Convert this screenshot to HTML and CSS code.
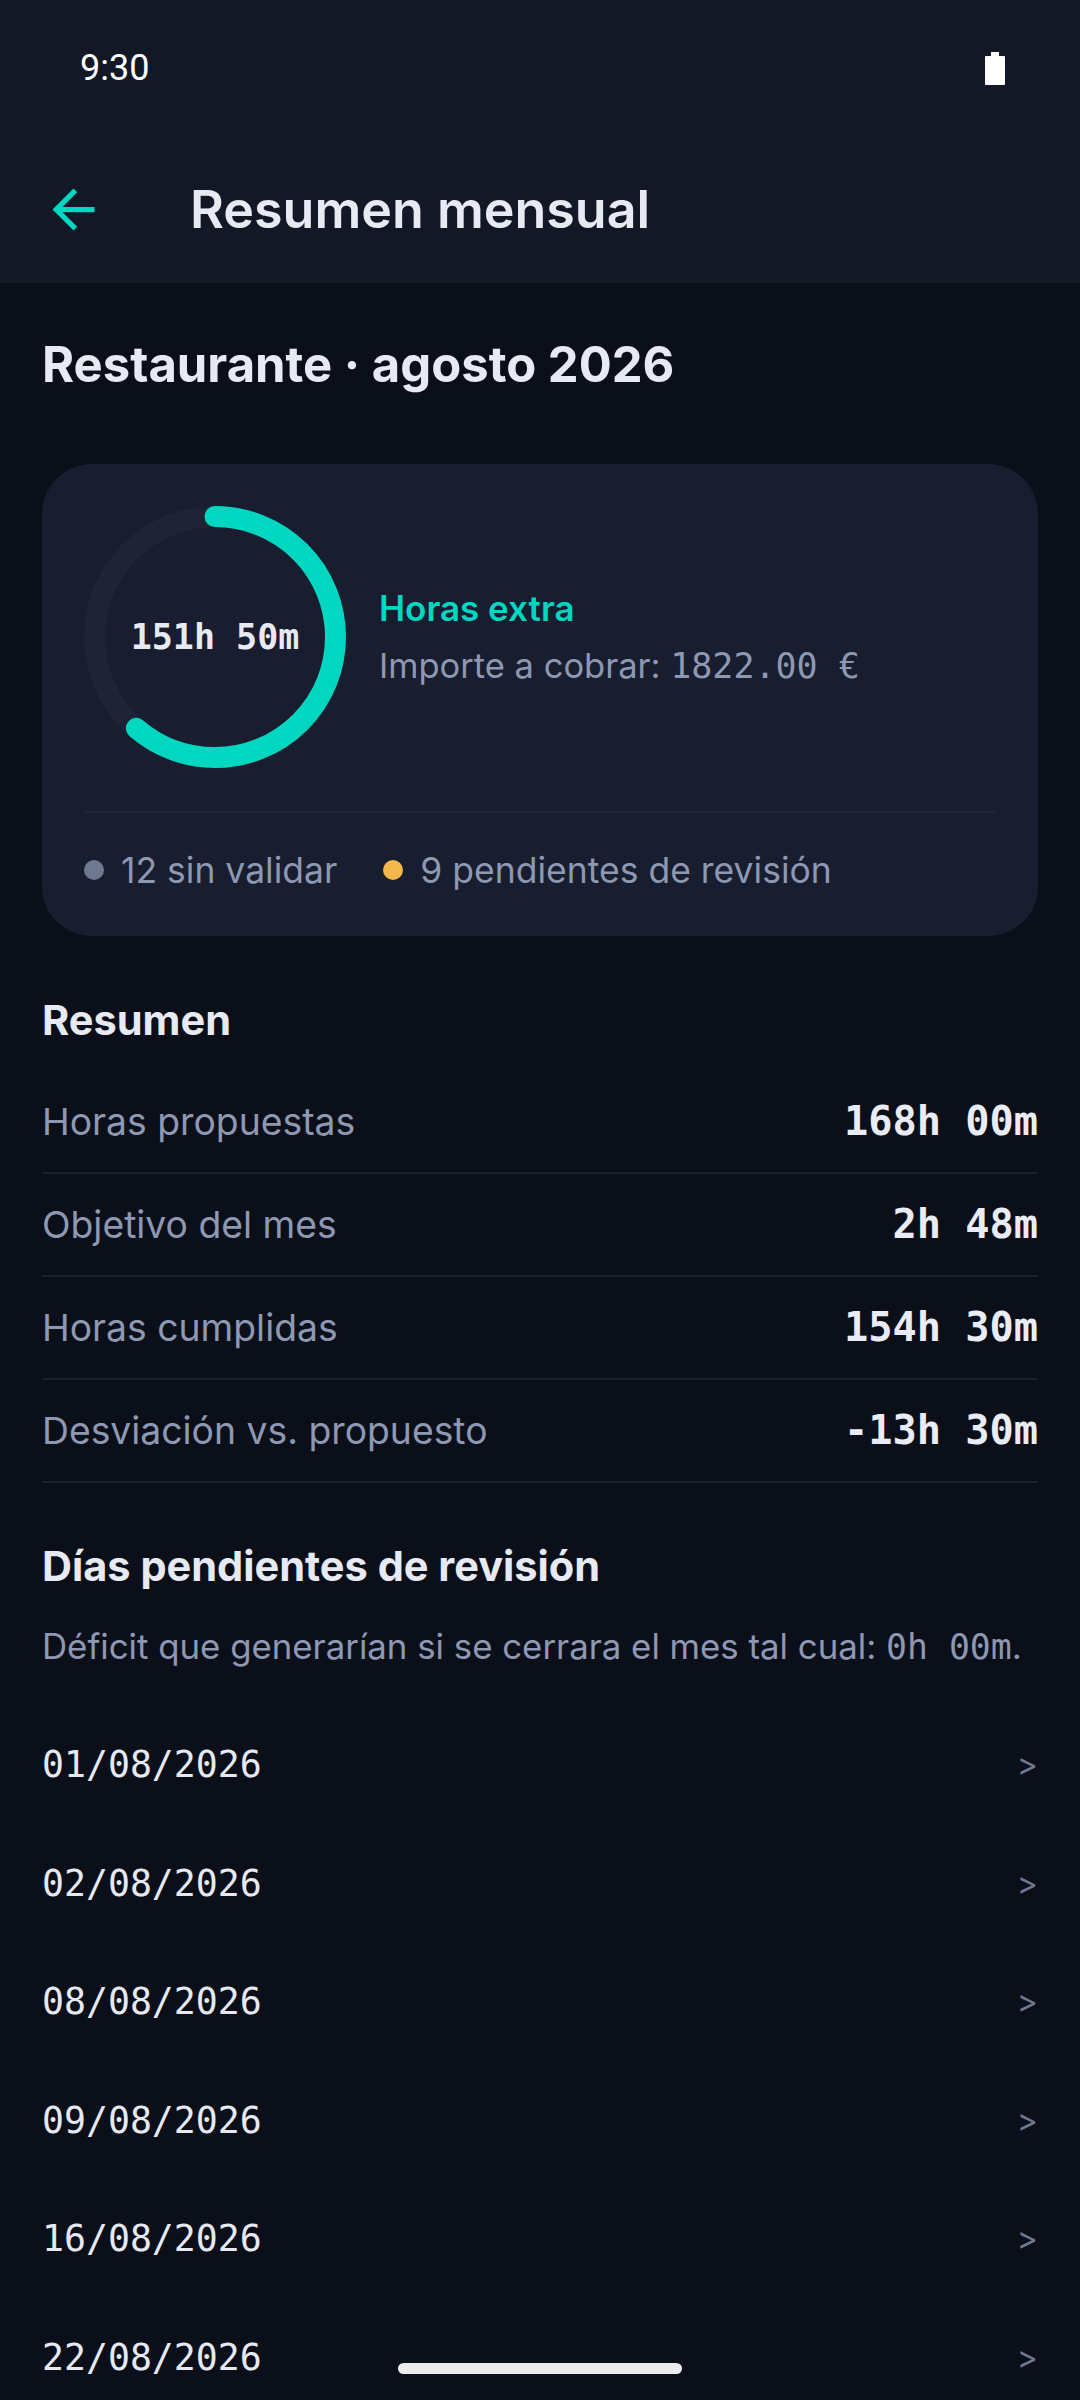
FILE: index.html
```html
<!DOCTYPE html>
<html lang="es">
<head>
    <meta charset="UTF-8">
    <meta name="viewport" content="width=device-width, initial-scale=1.0">
    <title>Resumen mensual</title>
    <link rel="stylesheet" href="styles.css">
</head>
<body>
    <div class="screen">
        <div class="status-bar">
            <span class="clock">9:30</span>
            <svg class="battery" width="20" height="33" viewBox="0 0 20 33">
                <rect x="6" y="0" width="8" height="5" fill="#ffffff"/>
                <rect x="0" y="4" width="20" height="29" rx="1" fill="#ffffff"/>
            </svg>
        </div>

        <header class="app-bar">
            <button class="back-button" aria-label="Volver">
                <svg width="63" height="63" viewBox="0 0 24 24">
                    <path d="M7.825 13L13.425 18.6L12 20L4 12L12 4L13.425 5.4L7.825 11H20V13H7.825Z" fill="#00d6c0"/>
                </svg>
            </button>
            <h1>Resumen mensual</h1>
        </header>

        <main class="content">
            <h2 class="page-title">Restaurante · agosto 2026</h2>

            <section class="overtime-card">
                <div class="overtime-main">
                    <div class="ring">
                        <svg width="262" height="262" viewBox="0 0 262 262">
                            <circle cx="131" cy="131" r="120.5" fill="none" stroke="#1f2435" stroke-width="21"/>
                            <circle cx="131" cy="131" r="120.5" fill="none" stroke="#00d6c0" stroke-width="21"
                                    stroke-linecap="round" stroke-dasharray="464 1000"
                                    transform="rotate(-90 131 131)"/>
                        </svg>
                        <span class="ring-label">151h 50m</span>
                    </div>
                    <div class="overtime-info">
                        <div class="overtime-title">Horas extra</div>
                        <div class="overtime-amount">Importe a cobrar: <span class="mono">1822.00 €</span></div>
                    </div>
                </div>
                <div class="card-divider"></div>
                <div class="legend">
                    <span class="legend-item"><span class="dot dot-grey"></span>12 sin validar</span>
                    <span class="legend-item"><span class="dot dot-amber"></span>9 pendientes de revisión</span>
                </div>
            </section>

            <h3 class="section-title summary-title">Resumen</h3>
            <div class="summary">
                <div class="summary-row">
                    <span class="summary-label">Horas propuestas</span>
                    <span class="summary-value">168h 00m</span>
                </div>
                <div class="summary-row">
                    <span class="summary-label">Objetivo del mes</span>
                    <span class="summary-value">2h 48m</span>
                </div>
                <div class="summary-row">
                    <span class="summary-label">Horas cumplidas</span>
                    <span class="summary-value">154h 30m</span>
                </div>
                <div class="summary-row">
                    <span class="summary-label">Desviación vs. propuesto</span>
                    <span class="summary-value">-13h 30m</span>
                </div>
            </div>

            <h3 class="section-title pending-title">Días pendientes de revisión</h3>
            <p class="section-note">Déficit que generarían si se cerrara el mes tal cual: <span class="mono">0h 00m</span>.</p>

            <ul class="day-list">
                <li class="day-row"><span class="day-date">01/08/2026</span><span class="chevron">&gt;</span></li>
                <li class="day-row"><span class="day-date">02/08/2026</span><span class="chevron">&gt;</span></li>
                <li class="day-row"><span class="day-date">08/08/2026</span><span class="chevron">&gt;</span></li>
                <li class="day-row"><span class="day-date">09/08/2026</span><span class="chevron">&gt;</span></li>
                <li class="day-row"><span class="day-date">16/08/2026</span><span class="chevron">&gt;</span></li>
                <li class="day-row"><span class="day-date">22/08/2026</span><span class="chevron">&gt;</span></li>
            </ul>
        </main>

        <div class="home-indicator"></div>
    </div>
</body>
</html>
```

FILE: styles.css
```css
body {
    margin: 0;
    background-color: #0b0f19;
    font-family: 'Inter', 'Noto Sans', sans-serif;
    color: #e7eaf3;
}
.screen {
    position: relative;
    width: 1080px;
    height: 2400px;
    overflow: hidden;
    background-color: #0b0f19;
}
.mono {
    font-family: 'DejaVu Sans Mono', monospace;
}

/* status bar + app bar */
.status-bar {
    height: 136px;
    display: flex;
    align-items: center;
    justify-content: space-between;
    padding: 0 75px 0 80px;
    background-color: #131826;
}
.clock {
    font-family: 'Roboto', sans-serif;
    font-size: 36px;
    color: #ffffff;
}
.battery {
    display: block;
}
.app-bar {
    height: 147px;
    display: flex;
    align-items: center;
    padding-left: 42px;
    background-color: #131826;
}
.back-button {
    width: 63px;
    height: 63px;
    padding: 0;
    border: none;
    background: none;
}
.back-button svg {
    display: block;
}
.app-bar h1 {
    margin: 0 0 0 85px;
    font-size: 52px;
    font-weight: 600;
    line-height: 64px;
    color: #e7eaf3;
}

/* content */
.content {
    padding: 0 42px;
}
.page-title {
    margin: 52px 0 0;
    font-size: 49px;
    font-weight: 700;
    line-height: 60px;
}

.overtime-card {
    margin-top: 69px;
    padding: 42px 42px 43px;
    background-color: #181d2f;
    border-radius: 50px;
}
.overtime-main {
    display: flex;
    align-items: center;
    gap: 33px;
}
.ring {
    display: grid;
    place-items: center;
    width: 262px;
    height: 262px;
}
.ring svg,
.ring-label {
    grid-area: 1 / 1;
}
.ring-label {
    font-family: 'DejaVu Sans Mono', monospace;
    font-size: 35px;
    font-weight: 700;
    color: #e7eaf3;
}
.overtime-info {
    display: flex;
    flex-direction: column;
    gap: 12px;
}
.overtime-title {
    font-size: 35px;
    font-weight: 600;
    line-height: 46px;
    color: #00d6c0;
}
.overtime-amount {
    font-size: 34.5px;
    line-height: 46px;
    color: #8e98b2;
}
.overtime-amount .mono {
    font-size: 35px;
}
.card-divider {
    height: 2px;
    margin-top: 43px;
    background-color: #1f2538;
}
.legend {
    display: flex;
    align-items: center;
    gap: 46px;
    height: 46px;
    margin-top: 34px;
    font-size: 35.5px;
    color: #8e98b2;
}
.legend-item {
    display: flex;
    align-items: center;
}
.dot {
    width: 20px;
    height: 20px;
    border-radius: 50%;
    margin-right: 17px;
}
.dot-grey {
    background-color: #6f7891;
}
.dot-amber {
    background-color: #f2b84b;
}

/* sections */
.section-title {
    margin: 0;
    font-size: 41.5px;
    font-weight: 700;
    line-height: 48px;
}
.summary-title {
    margin-top: 60px;
}
.summary {
    margin-top: 27px;
}
.summary-row {
    display: flex;
    justify-content: space-between;
    align-items: center;
    height: 44px;
    padding: 29px 0 28px;
    line-height: 44px;
    border-bottom: 2px solid #1b2030;
}
.summary-label {
    font-size: 37.3px;
    color: #8e98b2;
}
.summary-value {
    font-family: 'DejaVu Sans Mono', monospace;
    font-size: 40.3px;
    font-weight: 700;
    color: #e9ecf5;
}
.pending-title {
    margin-top: 59px;
}
.section-note {
    margin: 34px 0 0;
    font-size: 34.8px;
    line-height: 44px;
    color: #8e98b2;
}

.day-list {
    list-style: none;
    margin: 37px 0 0;
    padding: 0;
}
.day-row {
    display: flex;
    justify-content: space-between;
    align-items: center;
    padding: 37.25px 0;
    line-height: 44px;
}
.day-date {
    font-family: 'DejaVu Sans Mono', monospace;
    font-size: 36.5px;
    color: #e6e9f2;
}
.chevron {
    font-size: 32px;
    color: #6f7891;
}

.home-indicator {
    position: absolute;
    left: 398px;
    top: 2363px;
    width: 284px;
    height: 11px;
    border-radius: 6px;
    background-color: #ececec;
}
```
